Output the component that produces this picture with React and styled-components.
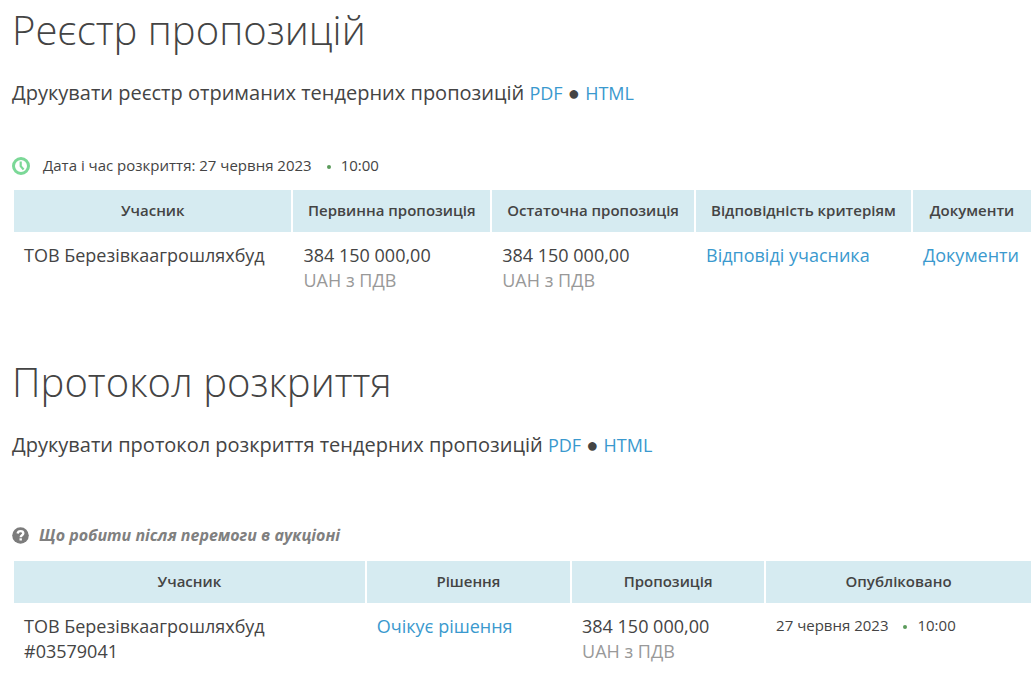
import styled, { createGlobalStyle } from "styled-components";

const GlobalStyle = createGlobalStyle`
  * {
    box-sizing: border-box;
  }
  body {
    margin: 0;
    background-color: #fff;
    color: #444;
    font-family: "Open Sans", "Noto Sans", sans-serif;
    font-size: 18px;
    line-height: 25px;
  }
`;
const Page = styled.main`
  display: grid;
  grid-template-columns: minmax(0, 1fr);
  gap: 65px;
  padding: 6px 0 0 12px;
`;
const Section = styled.section`
  min-width: 0;
`;
const Title = styled.h2`
  margin: 0 0 26px;
  font-weight: 300;
  font-size: 40px;
  line-height: 48px;
`;
const PrintLine = styled.p`
  margin: 0;
  font-size: 20px;
  line-height: 26px;
`;
const Link = styled.a`
  color: #3a99ce;
  font-size: 18px;
  text-decoration: none;

  &:hover {
    text-decoration: underline;
  }
`;
const OpeningTime = styled.div`
  display: flex;
  align-items: center;
  gap: 13px;
  margin: 47px 0 12px;
  font-size: 15px;
`;
const Hint = styled.div`
  display: flex;
  align-items: center;
  gap: 10px;
  margin: 65px 0 13px;
  color: #808080;
  font-size: 16px;
  font-style: italic;
  font-weight: 700;
`;
const DateTime = styled.div`
  font-size: 15px;
  line-height: 22px;
`;
const Dot = styled.span`
  display: inline-block;
  width: 4px;
  height: 4px;
  margin: 0 10px 2px 15px;
  border-radius: 50%;
  background-color: #5b9b5b;
`;
const Table = styled.table`
  width: 100%;
  table-layout: fixed;
  border-spacing: 2px 0;
`;
const Col = styled.col`
  width: ${({ $width }) => $width};
`;
const Th = styled.th`
  height: 42px;
  padding: 0 10px 2px;
  background-color: #d6ebf1;
  font-weight: 600;
  font-size: 15px;
  text-align: center;
  white-space: nowrap;
`;
const Td = styled.td`
  padding: 11px 10px 0;
  vertical-align: top;
`;
const Currency = styled.div`
  color: #999;
`;

function Clock() {
  return (
    <svg width="18" height="18" viewBox="0 0 18 18" fill="none" stroke="#7bd897">
      <circle cx="9" cy="9" r="7.5" strokeWidth="3" />
      <path d="M8.7 4.4V9.2L11.6 12.4" strokeWidth="2.2" />
    </svg>
  );
}

function Question() {
  return (
    <svg width="17" height="17" viewBox="0 0 17 17" fill="none">
      <circle cx="8.5" cy="8.5" r="8.3" fill="#7c7c7c" />
      <path
        d="M5.6 6.5C5.9 4.8 7 4.1 8.6 4.1C10.2 4.1 11.3 5 11.3 6.3C11.3 8.2 8.7 8.2 8.7 10.2"
        stroke="#fff"
        strokeWidth="2.4"
      />
      <path d="M7.5 11.3H9.9V13.5H7.5Z" fill="#fff" />
    </svg>
  );
}

function Price() {
  return (
    <>
      384 150 000,00
      <Currency>UAH з ПДВ</Currency>
    </>
  );
}

function PublishedAt() {
  return (
    <>
      27 червня 2023
      <Dot />
      10:00
    </>
  );
}

export default function App() {
  return (
    <Page>
      <GlobalStyle />
      <Section>
        <Title>Реєстр пропозицій</Title>
        <PrintLine>
          Друкувати реєстр отриманих тендерних пропозицій{" "}
          <Link href="#bids-pdf">PDF</Link> ● <Link href="#bids-html">HTML</Link>
        </PrintLine>
        <OpeningTime>
          <Clock />
          <span>
            Дата і час розкриття: <PublishedAt />
          </span>
        </OpeningTime>
        <Table>
          <colgroup>
            <Col $width="27.5%" />
            <Col $width="19.5%" />
            <Col $width="20%" />
            <Col $width="21.3%" />
            <Col />
          </colgroup>
          <thead>
            <tr>
              <Th>Учасник</Th>
              <Th>Первинна пропозиція</Th>
              <Th>Остаточна пропозиція</Th>
              <Th>Відповідність критеріям</Th>
              <Th>Документи</Th>
            </tr>
          </thead>
          <tbody>
            <tr>
              <Td>ТОВ Березівкаагрошляхбуд</Td>
              <Td>
                <Price />
              </Td>
              <Td>
                <Price />
              </Td>
              <Td>
                <Link href="#answers">Відповіді учасника</Link>
              </Td>
              <Td>
                <Link href="#documents">Документи</Link>
              </Td>
            </tr>
          </tbody>
        </Table>
      </Section>
      <Section>
        <Title>Протокол розкриття</Title>
        <PrintLine>
          Друкувати протокол розкриття тендерних пропозицій{" "}
          <Link href="#protocol-pdf">PDF</Link> ●{" "}
          <Link href="#protocol-html">HTML</Link>
        </PrintLine>
        <Hint>
          <Question />
          Що робити після перемоги в аукціоні
        </Hint>
        <Table>
          <colgroup>
            <Col $width="34.7%" />
            <Col $width="20.1%" />
            <Col $width="19%" />
            <Col />
          </colgroup>
          <thead>
            <tr>
              <Th>Учасник</Th>
              <Th>Рішення</Th>
              <Th>Пропозиція</Th>
              <Th>Опубліковано</Th>
            </tr>
          </thead>
          <tbody>
            <tr>
              <Td>
                ТОВ Березівкаагрошляхбуд
                <br />
                #03579041
              </Td>
              <Td>
                <Link href="#decision">Очікує рішення</Link>
              </Td>
              <Td>
                <Price />
              </Td>
              <Td>
                <DateTime>
                  <PublishedAt />
                </DateTime>
              </Td>
            </tr>
          </tbody>
        </Table>
      </Section>
    </Page>
  );
}
